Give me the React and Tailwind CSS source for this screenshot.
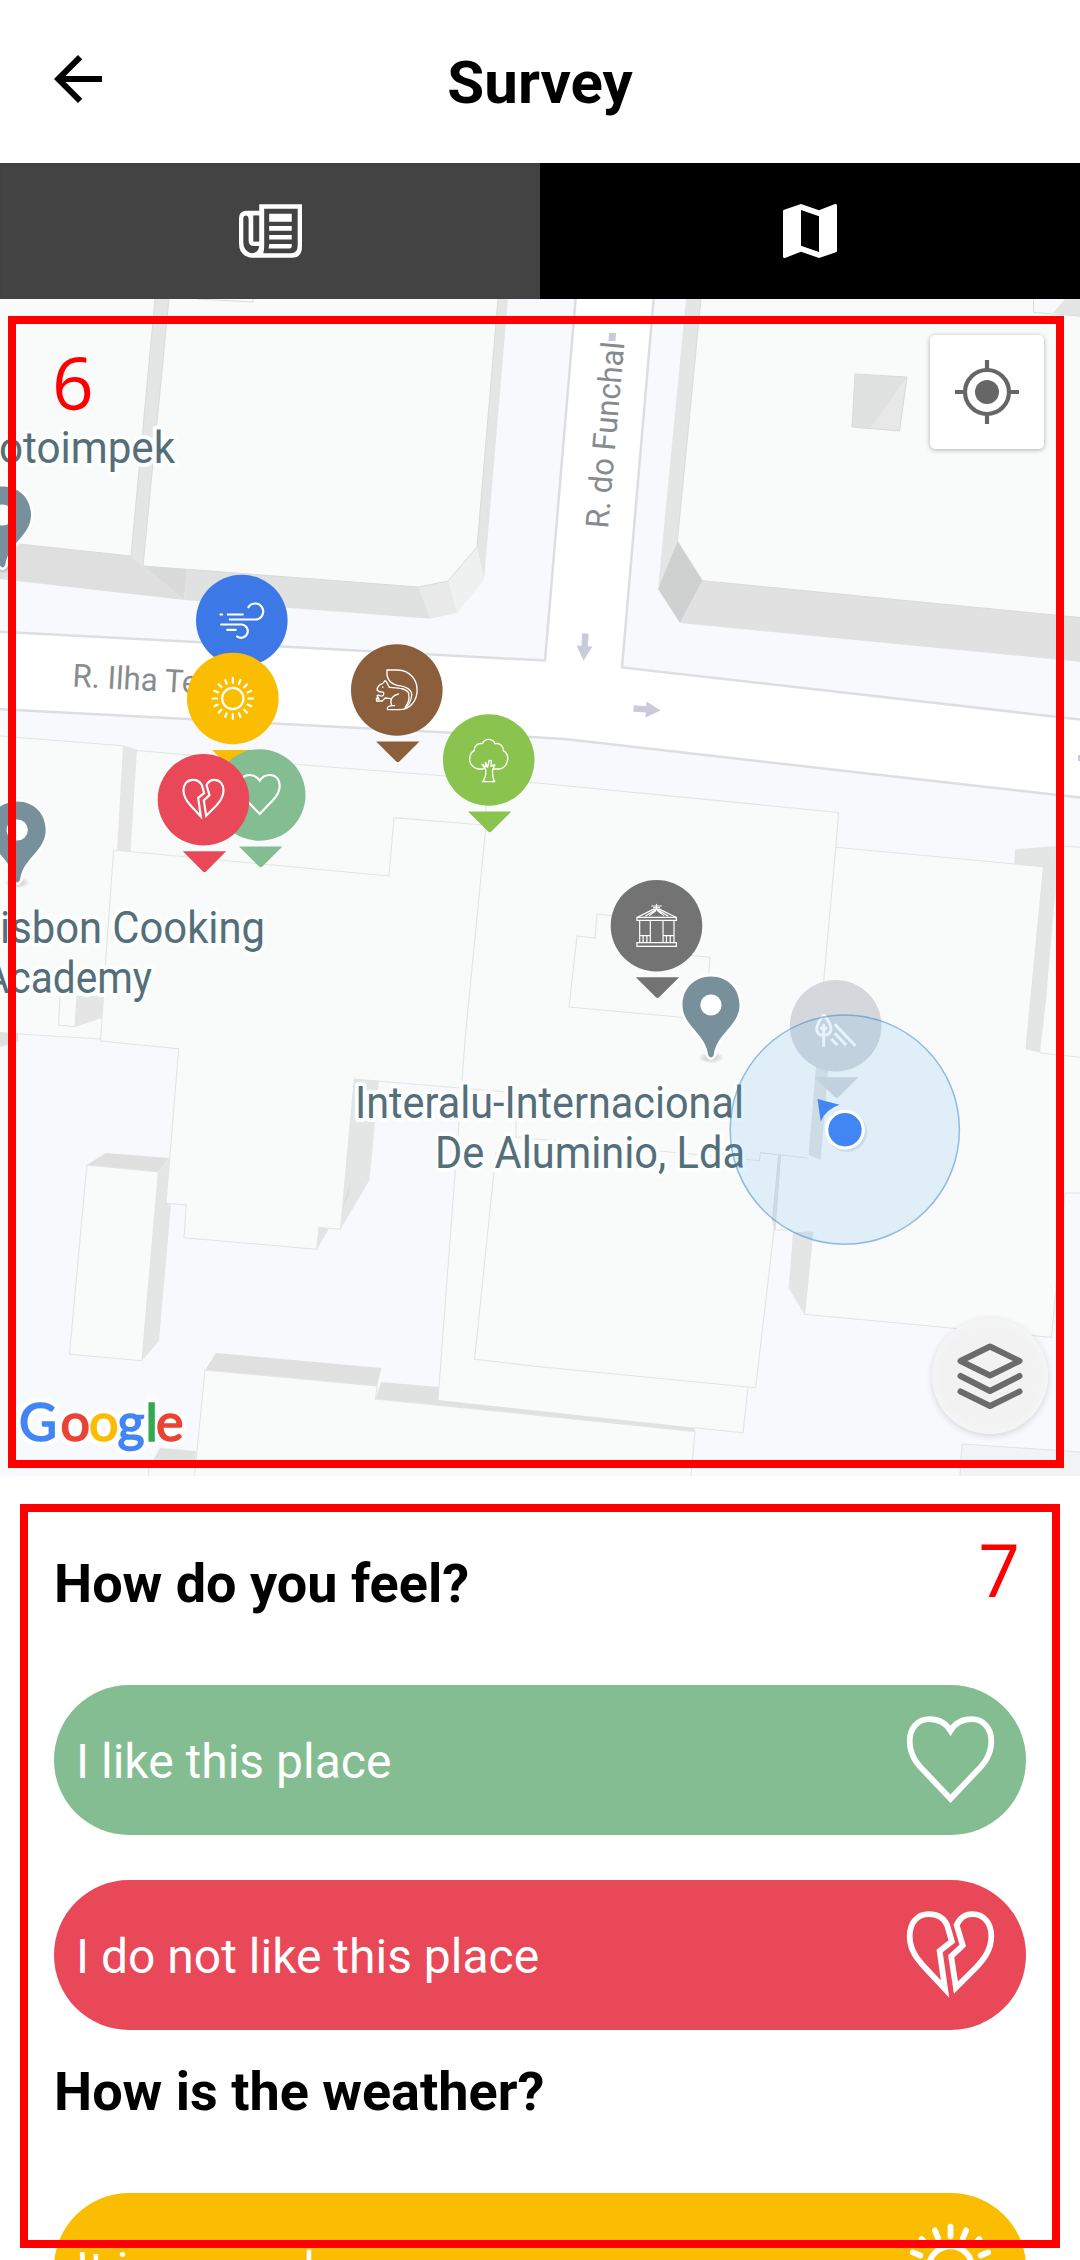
import React from "react";

const HEART =
  "M0 -43C-8 -56 -19 -60 -31 -60C-49 -60 -60 -46 -60 -28C-60 -8 -50 5 -38 17L0 57L38 17C50 5 60 -8 60 -28C60 -46 49 -60 31 -60C19 -60 8 -56 0 -43Z";

const RAYS = Array.from({ length: 16 }, (_, i) => i * 22.5);

// Pictograms are drawn around 0,0 in a box of about 128 units.
const GLYPHS = {
  wind: (
    <g strokeWidth="6.5">
      <path d="M-64 -18h5M-42 -18H3M-36 -3H40a24 24 0 1 0 -20 -37M-62 12H0a20 20 0 1 1 -14 36M-44 28H-18" />
    </g>
  ),
  sun: (
    <g>
      <circle r="32" />
      {RAYS.map((a) => (
        <path key={a} d={a % 90 === 0 ? "M0 -47V-61" : "M0 -48V-60"} transform={`rotate(${a})`} />
      ))}
    </g>
  ),
  heart: <path d={HEART} strokeLinejoin="miter" />,
  broken: (
    <g strokeLinejoin="miter" strokeMiterlimit="8">
      <path d="M-5 -44C-10 -55 -20 -60 -32 -60C-50 -60 -60 -46 -60 -28C-60 -8 -50 5 -38 18L-8 50L-16 -6L2 -20Z" />
      <path d="M9 -44C14 -55 22 -60 32 -60C50 -60 60 -46 60 -28C60 -8 50 5 38 18L8 48L1 2L18 -14Z" />
    </g>
  ),
  squirrel: (
    <g strokeWidth="4" transform="translate(-171 -180)">
      <path d="M142 120H174C210 121 232 149 232 180C232 213 210 239 178 239H144C139 231 148 226 164 227" />
      <path d="M142 120C139 143 150 160 172 166C201 169 215 178 216 195C214 213 208 226 194 236" />
      <path d="M149 172C174 174 198 174 206 188C210 206 206 220 197 230" />
      <path d="M149 172C143 164 142 154 136 152L129 160C118 164 112 172 112 180C117 187 126 186 131 187C134 194 130 203 117 195L112 197L118 208L110 204V213H127L136 204L152 206" />
      <path d="M155 224C149 207 160 196 176 192M129 171v1" />
    </g>
  ),
  tree: (
    <g strokeWidth="4" transform="translate(-446 -389)">
      <path d="M430 416H413C399 412 387 400 389 384C390 372 396 364 402 362C402 346 414 337 427 340C434 323 458 323 465 340C479 337 490 347 490 361C499 366 504 376 503 388C500 404 490 415 477 416H462" />
      <path d="M428 454H464C457 444 457 430 458 418L464 403L453 408L454 391L447 390L443 410L436 396L438 410L426 402L437 418C438 430 436 444 428 454Z" />
    </g>
  ),
  gazebo: (
    <g strokeWidth="3.5" transform="scale(1.03 1) translate(-338 -857)" strokeLinejoin="miter">
      <path d="M281 832H396V841H281ZM281 908H396V919H281ZM289 841V907M320 841V907M357 841V907M389 841V907M289 887H320M357 887H389M299 887V907M310 887V907M367 887V907M378 887V907" />
      <path d="M284 831L328 808H348L393 831M306 828L334 810M318 826L336 812M371 828L343 810M359 826L341 812M324 798H352M330 803H347M328 808H350M338 793V808" />
    </g>
  ),
  playground: (
    <g strokeWidth="9" transform="translate(-858 -77)" strokeLinecap="square">
      <path d="M822 46C808 62 801 76 801 88C802 99 810 106 822 106C835 106 843 98 844 86C843 72 834 58 822 46ZM822 76V136M815 84L822 92L829 84" />
      <path d="M858 76L914 134M858 103L886 132M848 120L860 132" />
    </g>
  ),
};

function Glyph({ name, scale, width = 6.5 }) {
  return (
    <g transform={`scale(${scale})`} fill="none" stroke="#fff" strokeWidth={width} strokeLinecap="round" strokeLinejoin="round">
      {GLYPHS[name]}
    </g>
  );
}

function Marker({ x, y, color, glyph }) {
  return (
    <g transform={`translate(${x} ${y})`}>
      <circle r="45.8" fill={color} />
      <path d="M-20.7 51.5H22.7L2.6 71.6Q1 72.8 -.6 71.6Z" fill={color} />
      <Glyph name={glyph} scale={0.3333} />
    </g>
  );
}

function Pin({ x, y }) {
  return (
    <g transform={`translate(${x} ${y})`}>
      <ellipse cx="0" cy="52.5" rx="13" ry="6" fill="url(#pin-shadow)" />
      <path
        d="M0 -28.5C-17 -28.5 -28.5 -16 -28.5 0C-28.5 21 -5.5 28 -2.8 50Q0 55 2.8 50C5.5 28 28.5 21 28.5 0C28.5 -16 17 -28.5 0 -28.5Z"
        fill="#78909c"
        stroke="#fff"
        strokeWidth="5"
        paintOrder="stroke"
      />
      <circle r="10.6" fill="#fff" />
    </g>
  );
}

function Buildings() {
  return (
    <g>
      <rect x="0" y="299" width="1080" height="1177" fill="#f8f9fc" />
      {/* roads */}
      <path
        d="M-5 631.5L196 642L545 660.5L576 295H654L622 667.5L918 701L1085 720V798L898 777L565 739L540 737.4L-5 709Z"
        fill="#fff"
        stroke="#dddee3"
        strokeWidth="2.5"
      />
      {/* northern blocks */}
      <g stroke="none">
        <path d="M0 299H155L131 556L0 542Z" fill="#f9fbfa" />
        <path d="M155 299H169L143 566L131 556Z" fill="#e4e6e5" />
        <path d="M169 299H498L477 547L448.4 581L418.5 587L143 566Z" fill="#f9fbfa" />
        <path d="M498 299H508L484 580L477 547Z" fill="#e4e6e5" />
        <path d="M477 547L484 580L457 613L448.4 581Z" fill="#eff0f0" />
        <path d="M448.4 581L457 613L430.5 618.7L418.5 587Z" fill="#e9e9e9" />
        <path d="M418.5 587L430.5 618.7L184 600L187 569Z" fill="#e0e2e1" />
        <path d="M143 566L187 569L184 600Z" fill="#dadada" />
        <path d="M0 542L131 556L143 566L184 600L0 579Z" fill="#dfdfdf" />
        <path d="M686 299H701L677.4 541L658 589Z" fill="#e4e6e5" />
        <path d="M701 299H1080V617.5L702.5 580.7L677.4 541Z" fill="#f9fbfa" />
        <path d="M677.4 541L702.5 580.7L680 623L658 589Z" fill="#cfd1d0" />
        <path d="M702.5 580.7L1080 617.5V661.7L680 623Z" fill="#e0e1e0" />
        <path d="M1033.5 299H1065L1053 313L1033.5 312.5Z" fill="#f8f9fc" />
        <path d="M1065 299H1080V316L1053 313Z" fill="#e4e6e5" />
        <path d="M855 374L907 377L899.5 431L852 427Z" fill="#e0e2e1" />
        <path d="M907 377L899.5 431L870.6 428Z" fill="#e8e8e8" />
      </g>
      <g fill="none" stroke="#d9dbda" strokeWidth="1">
        <path d="M0 542L131 556L155 299M169 299L143 566L418.5 587L448 581L477 547L498 299M702.5 580.7L1080 617.5M677.4 541L702.5 580.7M701 299L677.4 541M1033.5 299V312.5L1080 316M197 299L253 302V299M855 374L907 377L899.5 431L852 427Z" />
      </g>
      {/* southern block */}
      <path d="M0 736L123 745.7L137 750.5L304 765L540 783.3L838.6 812.4L835.8 847.3L1013.9 864L1056 846L1080 847.3V1476H0Z" fill="#f9fbfa" />
      <path d="M0 1034L100 1040L178.7 1048.7L166 1203.3L186.3 1205L184 1237.7L316.8 1249.3L319 1227.3L340.6 1229.3L354.4 1079L461.5 1088L438 1400L376 1399L377 1386L205 1370L196 1451L160 1448L148 1476H0Z" fill="#f8f9fc" />
      <path d="M774 1230L793 1231L788.6 1288L804.5 1314.3L1051.4 1337.3L1065 1193L1080 1194V1476H691L695 1431L743 1432.7L748 1387L755.6 1387.7Z" fill="#f8f9fc" />
      <path d="M962 1444L1080 1452V1476H960Z" fill="#f2f3f4" />
      <g stroke="none">
        <path d="M123 746L137 750.5L130.5 851.7L117 850.7Z" fill="#e6e6e6" />
        <path d="M354.4 1079L379 1081L369.5 1180L340.6 1229.3Z" fill="#e4e6e5" />
        <path d="M351 1178L343 1207L349 1196Z" fill="#dcdedd" />
        <path d="M319 1227.3L329 1228.5L316.8 1249.3Z" fill="#e4e4e4" />
        <path d="M77.5 996H103L102 1018L75 1027Z" fill="#e5e5e5" />
        <path d="M0 1032L18 1033V1042L0 1047Z" fill="#e0e0e0" />
        <path d="M86.8 1165L158.4 1172L142 1360.7L69.5 1354.3Z" fill="#f9fbfa" />
        <path d="M86.8 1165L105.7 1153L169.4 1158L158.4 1172Z" fill="#dfdfdf" />
        <path d="M158.4 1172L169.4 1159L166 1203L171 1205L159 1340.7L142 1360.7Z" fill="#e4e6e5" />
        <path d="M216 1353L381.6 1368L377 1386L205 1370Z" fill="#e0e0e0" />
        <path d="M381 1382L438.5 1387V1405L375.5 1399Z" fill="#e0e2e1" />
        <path d="M438 1400L695 1427.7L694 1432L438 1405Z" fill="#e0e2e1" />
        <path d="M160 1448L196 1451L195 1462H152Z" fill="#e0e2e1" />
        <path d="M1015.3 849.3L1056 846L1055.5 890L1046 1000L1040 1052.7L1026 1049.3L1043.5 866.7L1014 864Z" fill="#e4e6e5" />
        <path d="M793 1231.7L812.8 1232.3L804.5 1314.3L788.6 1288.3Z" fill="#e4e6e5" />
        <path d="M778.7 1155H780.6L775 1230L772.5 1220Z" fill="#e4e6e5" stroke="#dcdedd" />
        <path d="M816 1066H828.6L820.7 1160L808.6 1155Z" fill="#e2e4e3" />
        <path d="M496 1152L540 1156V1163L496 1159Z" fill="#eef0ef" />
      </g>
      <g fill="none" stroke="#e2e4e3" strokeWidth="1.1">
        <path d="M0 736L123 745.7L137 750.5L304 765L540 783.3L838.6 812.4L835.8 847.3L816 1066M835.8 847.3L1043.5 866.7L1026 1049.3M1063.5 846.3L1080 847.3M1040 1053L1080 1057.3" />
        <path d="M486 806V825L465 1040L461.5 1088L438 1400M483.5 825L394 817.7L389 876L113.6 850L105.7 960L100.5 1041L178.7 1048.7L166 1203.3L186.3 1205L184 1237.7L316.8 1249.3L319 1227.3L340.6 1229.3L354.4 1079L516 1092.7V1137L759.4 1160.7L760.4 1152.7L808.6 1158.3" />
        <path d="M18 1034L100.5 1039M60.6 985L58.5 1025L75 1026.7L77 996M86.8 1165L158.4 1172L142 1360.7L69.5 1354.3Z" />
        <path d="M496 1152L474.6 1359.3L540 1366.7L755.6 1387.7L774 1230H793M780 1155L774 1230M748 1387.7L743 1432.7L695 1427.7M691 1476L695 1431L375.5 1399L377 1386L205 1370L194.5 1476M148.6 1468V1476" />
        <path d="M804.5 1232L812 1232M812.8 1232.3L804.5 1314.3L1051.4 1337.3L1065 1193H1080M962 1444L1080 1452M962 1444L960 1476" />
        <path d="M625 917L597 914L595 938L577 936L569 1007L690 1018M690 955.5L710 957.3L708 985" />
      </g>
      {/* one-way arrows */}
      <g fill="#c9cbdd">
        <path transform="translate(584.5 647) rotate(4)" d="M-3.2 -13.5H3.2V-1H8L0 13.5L-8 -1H-3.2Z" />
        <path transform="translate(647 709.5) rotate(-86)" d="M-3.2 -13.5H3.2V-1H8L0 13.5L-8 -1H-3.2Z" />
        <path d="M609 333H616L615.5 341H608.5Z" />
        <path d="M1078 755H1080V761H1078Z" />
      </g>
    </g>
  );
}

function PlaceLabel({ x, y, length, anchor = "start", children }) {
  return (
    <text
      x={x}
      y={y}
      textLength={length}
      lengthAdjust="spacingAndGlyphs"
      textAnchor={anchor}
      fontSize="44"
      fill="#546e7a"
      stroke="#fcfdfd"
      strokeWidth="8"
      strokeLinejoin="round"
      paintOrder="stroke"
    >
      {children}
    </text>
  );
}

function GoogleMark() {
  const letters = [
    ["G", 19, "#4285f4"],
    ["o", 60.5, "#ea4335"],
    ["o", 89, "#fbbc05"],
    ["g", 117.5, "#4285f4"],
    ["l", 145.5, "#34a853"],
    ["e", 156, "#ea4335"],
  ];
  return (
    <g fontFamily="Lato, sans-serif" fontSize="52">
      {letters.map(([c, x, fill], i) => (
        <text key={i} x={x} y="1440.5" fill="none" stroke="#fff" strokeWidth="11" strokeLinejoin="round" aria-hidden="true">{c}</text>
      ))}
      {letters.map(([c, x, fill], i) => (
        <text key={i} x={x} y="1440.5" fill={fill} stroke={fill} strokeWidth="1.7">{c}</text>
      ))}
    </g>
  );
}

function MapView() {
  return (
    <div className="relative h-[1177px] w-full shrink-0 overflow-hidden">
      <svg viewBox="0 299 1080 1177" width="1080" height="1177" className="block font-[Roboto,sans-serif]">
        <defs>
          <radialGradient id="pin-shadow">
            <stop offset="0" stopColor="#000" stopOpacity=".25" />
            <stop offset="1" stopColor="#000" stopOpacity="0" />
          </radialGradient>
        </defs>
        <Buildings />
        <g fill="#868c8e" fontSize="32">
          <text transform="translate(72 686.5) rotate(3.2)" textLength="126" lengthAdjust="spacingAndGlyphs">R. Ilha Te</text>
          <text transform="translate(608 529) rotate(-85)" textLength="187" lengthAdjust="spacingAndGlyphs">R. do Funchal</text>
        </g>
        <Pin x={2.5} y={515} />
        <Pin x={17.2} y={830} />
        <Pin x={711} y={1005} />
        <PlaceLabel x={-1} y={462.7} length={176}>otoimpek</PlaceLabel>
        <PlaceLabel x={0} y={943.3} length={265}>isbon Cooking</PlaceLabel>
        <PlaceLabel x={152} y={993.3} length={169} anchor="end">Academy</PlaceLabel>
        <PlaceLabel x={355} y={1118.3} length={389}>Interalu-Internacional</PlaceLabel>
        <PlaceLabel x={435} y={1168.3} length={310}>De Aluminio, Lda</PlaceLabel>
        <Marker x={241.8} y={620.5} color="#3d79e6" glyph="wind" />
        <Marker x={232.8} y={698.5} color="#fabd02" glyph="sun" />
        <Marker x={396.8} y={690} color="#8b5f3c" glyph="squirrel" />
        <Marker x={488.7} y={760} color="#8bc34f" glyph="tree" />
        <Marker x={259.7} y={795} color="#84bd91" glyph="heart" />
        <Marker x={203.5} y={799.8} color="#e94858" glyph="broken" />
        <Marker x={656.5} y={925.7} color="#737373" glyph="gazebo" />
        <Marker x={835.7} y={1025.7} color="#d4d8dc" glyph="playground" />
        <circle cx="844.8" cy="1129.7" r="114.6" fill="rgb(80 168 236 / .14)" stroke="rgb(50 130 205 / .5)" strokeWidth="1.5" />
        <path d="M817.5 1099L839.5 1104.7Q826 1109 820.7 1121.5Z" fill="#4285f4" />
        <circle cx="847" cy="1132" r="20" fill="#000" opacity=".08" />
        <circle cx="845" cy="1129.7" r="18.3" fill="#4285f4" stroke="#fff" strokeWidth="3.2" />
        <GoogleMark />
      </svg>
      <button className="absolute top-[35.5px] right-[36px] grid size-[114px] place-items-center rounded-[5px] bg-white shadow-[0_1px_5px_rgba(0,0,0,0.3)]" aria-label="My location">
        <svg width="66" height="66" viewBox="-33 -33 66 66" fill="none" stroke="#666" strokeWidth="4.2">
          <circle r="22" />
          <circle r="12" fill="#666" stroke="none" />
          <path d="M0 -32V-23M0 32V23M-32 0H-23M32 0H23" />
        </svg>
      </button>
      <button className="absolute top-[1019px] left-[932px] grid size-[116px] place-items-center rounded-full bg-[#f2f2f2] shadow-[0_2px_7px_rgba(0,0,0,0.14),inset_0_0_12px_#f8f8f8]" aria-label="Layers">
        <svg width="70" height="70" viewBox="-35 -35 70 70" fill="none" stroke="#6b6b6b" strokeWidth="6" strokeLinecap="round" strokeLinejoin="round">
          <path d="M0 -29.5L29.5 -15L0 -.5L-29.5 -15ZM-29.5 0L0 15L29.5 0M-29.5 15.5L0 30L29.5 15.5" />
        </svg>
      </button>
    </div>
  );
}

function Option({ label, glyph, className }) {
  return (
    <button className={`flex h-[150px] w-full shrink-0 items-center justify-between rounded-full pr-8 pl-[22px] text-left text-[48px] text-white ${className}`}>
      <span className="pt-[3px]">{label}</span>
      <svg width="87" height="92" viewBox="-43.5 -46 87 92" className="overflow-visible">
        <Glyph name={glyph} scale={0.68} width={8.5} />
      </svg>
    </button>
  );
}

export default function App() {
  return (
    <div className="relative flex h-[2260px] w-[1080px] flex-col overflow-hidden bg-white font-[Roboto,sans-serif] text-black">
      <header className="relative flex h-[163px] shrink-0 items-center justify-center">
        <button className="absolute top-[55px] left-[54px]" aria-label="Back">
          <svg width="48" height="48" viewBox="4 4 16 16">
            <path d="M20 11H7.83l5.59-5.59L12 4l-8 8 8 8 1.41-1.41L7.83 13H20v-2z" />
          </svg>
        </button>
        <h1 className="pt-[2px] text-[60px] leading-none font-bold">Survey</h1>
      </header>

      <nav className="grid h-[136px] shrink-0 grid-cols-2">
        <button className="grid place-items-center bg-[#434343] shadow-[inset_0_3px_4px_rgba(0,0,0,0.06)]" aria-label="News">
          <svg width="63" height="54" viewBox="27 42 190 162">
            <path fill="#fff" d="M88 42H217V170Q217 204 185 204H68Q27 200 27 160V85Q27 62 50 62H88Z" />
            <g fill="#434343">
              <path d="M103 56H204V166Q204 190 184 190H100Q103 182 103 168Z" />
              <path d="M40 86Q40 76 49 76Q56 78 56 88V152Q56 168 70 168H88Q85 190 64 190Q40 184 40 158Z" />
              <path d="M70 76H88V155H70Z" />
            </g>
            <path fill="#fff" d="M118 71H186V95H118ZM118 108H186V122H118ZM118 135H186V149H118ZM118 162H186V170Q186 176 180 176H116Q118 170 118 162Z" />
          </svg>
        </button>
        <button className="grid place-items-center bg-black" aria-label="Map">
          <svg width="72" height="72" viewBox="0 0 24 24" fill="#fff">
            <path d="M20.5 3l-.16.03L15 5.1 9 3 3.36 4.9c-.21.07-.36.25-.36.48V20.5c0 .28.22.5.5.5l.16-.03L9 18.9l6 2.1 5.64-1.9c.21-.07.36-.25.36-.48V3.5c0-.28-.22-.5-.5-.5zM15 19l-6-2.11V5l6 2.11V19z" />
          </svg>
        </button>
      </nav>

      <MapView />

      <main className="flex flex-col px-[54px] pt-[76px]">
        <h2 className="h-[133px] shrink-0 text-[54px] leading-[64px] font-bold">How do you feel?</h2>
        <Option label="I like this place" glyph="heart" className="bg-[#84bd91]" />
        <Option label="I do not like this place" glyph="broken" className="mt-[45px] bg-[#e94858]" />
        <h2 className="mt-[30px] h-[133px] shrink-0 text-[54px] leading-[64px] font-bold">How is the weather?</h2>
        <Option label="It is normal" glyph="sun" className="bg-[#fabd02]" />
      </main>

      <div className="pointer-events-none absolute top-[316px] left-2 h-[1152px] w-[1056px] border-8 border-[#ff0000]">
        <span className="absolute top-[21px] left-[36px] font-['Open_Sans',sans-serif] text-[73px] leading-[73px] text-[#ff0000]">6</span>
      </div>
      <div className="pointer-events-none absolute top-[1504px] left-5 h-[744px] w-[1040px] border-8 border-[#ff0000]">
        <span className="absolute top-[20px] right-[32px] font-['Open_Sans',sans-serif] text-[73px] leading-[73px] text-[#ff0000]">7</span>
      </div>
    </div>
  );
}
